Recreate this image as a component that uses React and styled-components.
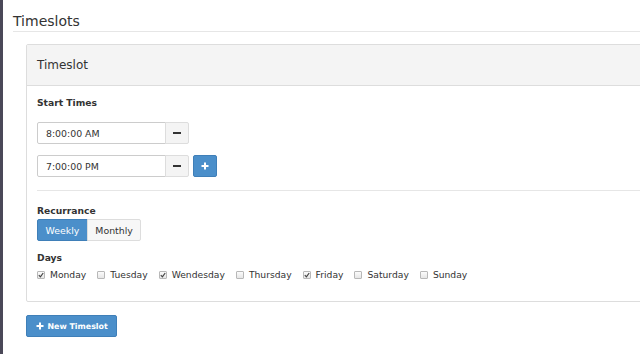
import React, { useState } from "react";
import styled, { createGlobalStyle } from "styled-components";

const GlobalStyle = createGlobalStyle`
  html, body {
    margin: 0;
    padding: 0;
    background: #ffffff;
    overflow: hidden;
  }
  body {
    font-family: "DejaVu Sans", Verdana, sans-serif;
    color: #333333;
  }
`;

const DAYS = [
  { name: "Monday", checked: true },
  { name: "Tuesday", checked: false },
  { name: "Wendesday", checked: true },
  { name: "Thursday", checked: false },
  { name: "Friday", checked: true },
  { name: "Saturday", checked: false },
  { name: "Sunday", checked: false },
];

const CheckBox = ({ checked }) => (
  <Box>
    {checked && (
      <svg width="6" height="6" viewBox="0 0 6 6">
        <path d="M0.8 3.2 L2.4 4.8 L5.2 1" stroke="#444" strokeWidth="1.2" fill="none" />
      </svg>
    )}
  </Box>
);

const App = () => {
  const [mode, setMode] = useState("weekly");
  const [times] = useState(["8:00:00 AM", "7:00:00 PM"]);

  return (
    <Page>
      <GlobalStyle />
      <SideStrip />
      <Content>
        <Title>Timeslots</Title>
        <Panel>
          <PanelHeader>Timeslot</PanelHeader>
          <PanelBody>
            <Label>Start Times</Label>
            <TimeList>
              {times.map((t, i) => (
                <TimeRow key={i}>
                  <InputGroup>
                    <TimeInput defaultValue={t} />
                    <IconButton>
                      <Minus />
                    </IconButton>
                  </InputGroup>
                  {i === times.length - 1 && (
                    <IconButton $primary>
                      <PlusIcon />
                    </IconButton>
                  )}
                </TimeRow>
              ))}
            </TimeList>
            <Divider />
            <Label>Recurrance</Label>
            <ButtonGroup>
              <ToggleButton $active={mode === "weekly"} onClick={() => setMode("weekly")}>
                Weekly
              </ToggleButton>
              <ToggleButton $active={mode === "monthly"} onClick={() => setMode("monthly")}>
                Monthly
              </ToggleButton>
            </ButtonGroup>
            <Label $tight>Days</Label>
            <DayRow>
              {DAYS.map((d) => (
                <DayItem key={d.name}>
                  <CheckBox checked={d.checked} />
                  {d.name}
                </DayItem>
              ))}
            </DayRow>
          </PanelBody>
        </Panel>
        <NewButton>
          <PlusIcon />
          New Timeslot
        </NewButton>
      </Content>
    </Page>
  );
};

export default App;

const PlusIcon = () => (
  <svg width="8" height="8" viewBox="0 0 8 8">
    <path d="M4 0.5 V7.5 M0.5 4 H7.5" stroke="#fff" strokeWidth="2" />
  </svg>
);

const Page = styled.div`
  display: flex;
  width: 640px;
  height: 354px;
`;

const SideStrip = styled.div`
  width: 3px;
  flex-shrink: 0;
  background: #4a4858;
`;

const Content = styled.div`
  flex: 1;
  padding-left: 10px;
  min-width: 0;
`;

const Title = styled.h1`
  margin: 0;
  padding: 13px 0 1px;
  font-size: 14px;
  font-weight: normal;
  line-height: 17px;
  color: #333;
  border-bottom: 1px solid #e6e6e6;
`;

const Panel = styled.div`
  margin: 12px 0 0 13px;
  width: 640px;
  border: 1px solid #dddddd;
  border-radius: 2px;
`;

const PanelHeader = styled.div`
  height: 40px;
  display: flex;
  align-items: center;
  padding-left: 10px;
  font-size: 12px;
  background: #f4f4f4;
  border-bottom: 1px solid #dddddd;
`;

const PanelBody = styled.div`
  padding: 10px 10px 20px;
`;

const Label = styled.div`
  font-size: 9.2px;
  font-weight: bold;
  line-height: 13px;
  margin-bottom: ${(p) => (p.$tight ? "5px" : "2px")};
`;

const TimeList = styled.div`
  display: flex;
  flex-direction: column;
  gap: 11px;
  margin-top: 13px;
`;

const TimeRow = styled.div`
  display: flex;
  align-items: center;
  gap: 4px;
`;

const InputGroup = styled.div`
  display: flex;
`;

const TimeInput = styled.input`
  box-sizing: border-box;
  width: 129px;
  height: 22px;
  padding: 0 8px;
  font-family: "DejaVu Sans", Verdana, sans-serif;
  font-size: 9.4px;
  color: #333;
  border: 1px solid #cccccc;
  border-radius: 2px 0 0 2px;
  outline: none;
`;

const IconButton = styled.button`
  box-sizing: border-box;
  width: 24px;
  height: 22px;
  display: flex;
  align-items: center;
  justify-content: center;
  padding: 0;
  border: 1px solid ${(p) => (p.$primary ? "#3f7fb8" : "#dddddd")};
  background: ${(p) => (p.$primary ? "#4b8fca" : "#f4f4f4")};
  border-radius: ${(p) => (p.$primary ? "2px" : "0 2px 2px 0")};
  margin-left: ${(p) => (p.$primary ? "0" : "-1px")};
`;

const Minus = styled.span`
  width: 8px;
  height: 2px;
  background: #333;
`;

const Divider = styled.div`
  margin: 13px 0 13px;
  border-top: 1px solid #e6e6e6;
`;

const ButtonGroup = styled.div`
  display: flex;
  margin-bottom: 10px;
`;

const ToggleButton = styled.button`
  box-sizing: border-box;
  height: 22px;
  padding: 0 7.5px;
  font-family: "DejaVu Sans", Verdana, sans-serif;
  font-size: 9.4px;
  color: ${(p) => (p.$active ? "#ffffff" : "#333333")};
  background: ${(p) => (p.$active ? "#4b8fca" : "#f7f7f7")};
  border: 1px solid ${(p) => (p.$active ? "#3f7fb8" : "#dddddd")};
  border-radius: 0;
  & + & {
    margin-left: -1px;
  }
  &:first-child {
    border-radius: 2px 0 0 2px;
  }
  &:last-child {
    border-radius: 0 2px 2px 0;
  }
`;

const DayRow = styled.div`
  display: flex;
  gap: 11px;
`;

const DayItem = styled.label`
  display: flex;
  align-items: center;
  gap: 5px;
  font-size: 9.2px;
  line-height: 12px;
  color: #333;
`;

const Box = styled.span`
  box-sizing: border-box;
  width: 8px;
  height: 8px;
  display: flex;
  align-items: center;
  justify-content: center;
  border: 1px solid #b8b8b8;
  border-radius: 1px;
  background: linear-gradient(#fbfbfb, #e6e6e6);
`;

const NewButton = styled.button`
  margin: 13px 0 0 13px;
  box-sizing: border-box;
  height: 22px;
  display: flex;
  align-items: center;
  gap: 4px;
  padding: 0 8.5px;
  font-family: "DejaVu Sans", Verdana, sans-serif;
  font-size: 7.9px;
  font-weight: bold;
  color: #ffffff;
  background: #4b8fca;
  border: 1px solid #3f7fb8;
  border-radius: 2px;
`;
